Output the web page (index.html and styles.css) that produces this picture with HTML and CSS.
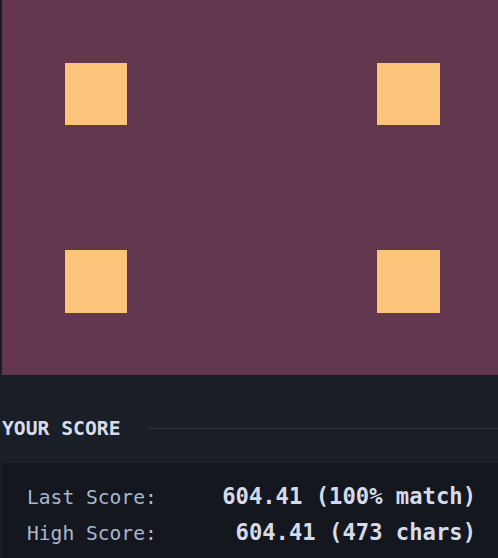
FILE: index.html
```html
<!DOCTYPE html>
<html>
<head>
<meta charset="utf-8">
<link rel="stylesheet" href="styles.css">
</head>
<body>
<div class="page">
  <div class="canvas">
    <div class="sq sq-tl"></div>
    <div class="sq sq-tr"></div>
    <div class="sq sq-bl"></div>
    <div class="sq sq-br"></div>
  </div>
  <div class="header">
    <span class="title">YOUR SCORE</span>
    <span class="rule"></span>
  </div>
  <div class="box">
    <div class="row">
      <span class="label">Last Score:</span>
      <span class="value">604.41 (100% match)</span>
    </div>
    <div class="row">
      <span class="label">High Score:</span>
      <span class="value">604.41 (473 chars)</span>
    </div>
  </div>
</div>
</body>
</html>
```
FILE: styles.css
```css
html, body {
  margin: 0;
  padding: 0;
  background: #1a1e26;
  overflow: hidden;
}
.page {
  padding-left: 2px;
  width: 496px;
  height: 558px;
  overflow: hidden;
  font-family: "DejaVu Sans Mono", "Liberation Mono", monospace;
}
.canvas {
  width: 500px;
  height: 375px;
  background: #62374e;
  display: grid;
  grid-template-columns: 62.5px 62.5px;
  grid-template-rows: 62.5px 62.5px;
  column-gap: 250px;
  row-gap: 125px;
  padding: 62.5px 0 0 62.5px;
  box-sizing: border-box;
}
.sq {
  background: #fdc57b;
}
.header {
  margin-top: 42px;
  display: flex;
  align-items: center;
  height: 24px;
}
.title {
  font-size: 19.7px;
  line-height: 24px;
  font-weight: bold;
  color: #d7dce9;
  white-space: nowrap;
}
.rule {
  flex: 1;
  height: 1px;
  background: #2a3139;
  margin-left: 26px;
  margin-top: -2px;
}
.box {
  margin-top: 21px;
  background: #14181e;
  border-top: 1px solid #1f242c;
  padding: 15px 22px 30px 25px;
}
.row {
  display: flex;
  justify-content: space-between;
  align-items: baseline;
  line-height: 36px;
  height: 36px;
}
.label {
  font-size: 19.6px;
  color: #a9b7d0;
}
.value {
  font-size: 22.2px;
  font-weight: bold;
  color: #d6dbeb;
}
```
